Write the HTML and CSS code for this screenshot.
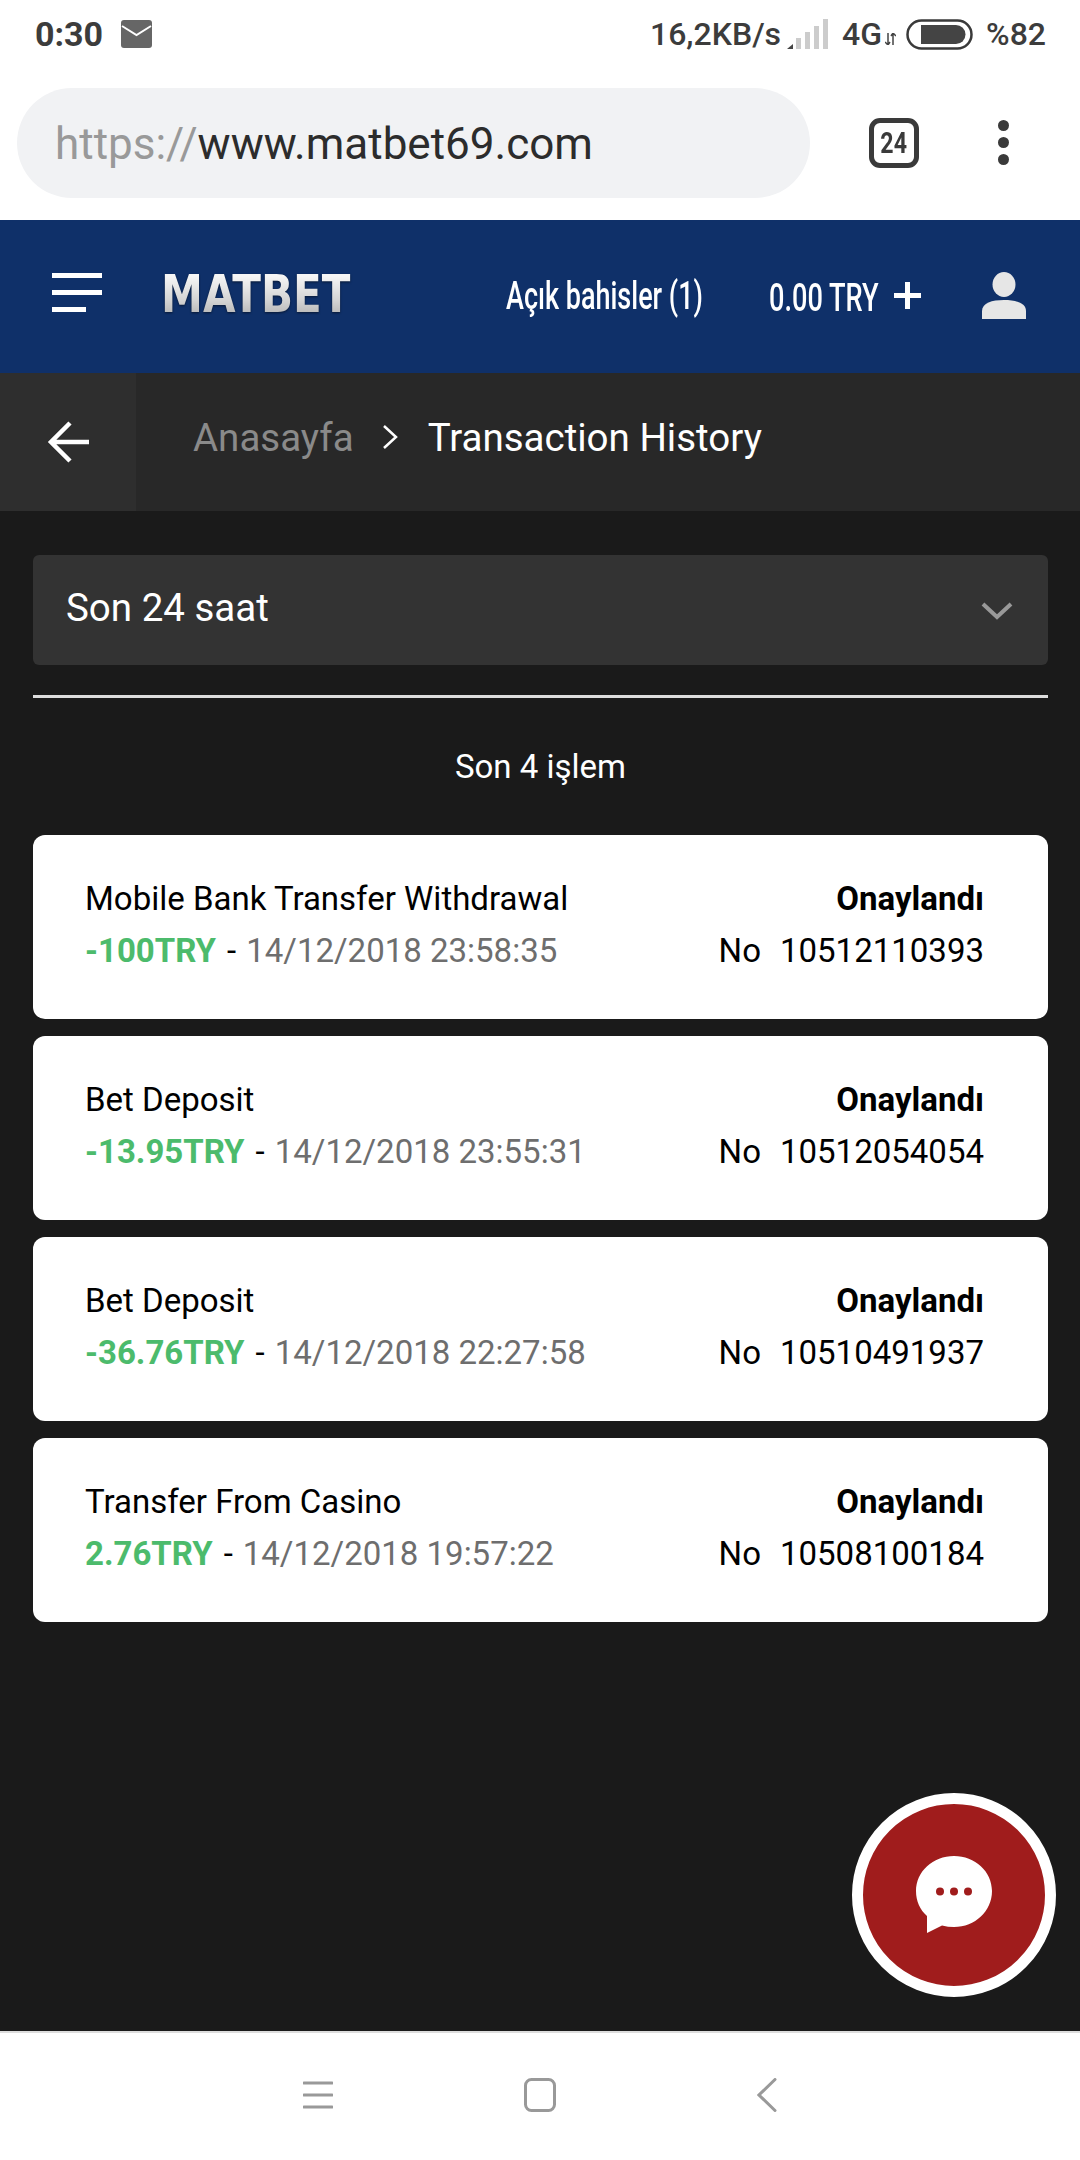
FILE: index.html
```html
<!DOCTYPE html>
<html lang="tr">

<head>
    <meta charset="UTF-8">
    <meta name="viewport" content="width=device-width, initial-scale=1.0">
    <title>Transaction History</title>
    <link rel="stylesheet" href="styles.css">
</head>

<body>
    <div class="statusBar">
        <div class="statusLeft">
            <span class="clock">0:30</span>
            <svg class="mailIcon" width="31" height="28" viewBox="0 0 31 28">
                <rect width="31" height="28" rx="3" fill="#666"/>
                <path d="M1 6 L15.5 15 L30 6" fill="none" stroke="#fff" stroke-width="2"/>
            </svg>
        </div>
        <div class="statusRight">
            <span>16,2KB/s</span>
            <svg class="signalIcon" width="42" height="31" viewBox="0 0 42 31">
                <path d="M1 30 L7 25 V30 Z" fill="#444"/>
                <rect x="10" y="19" width="5" height="11" fill="#ccc"/>
                <rect x="19" y="13" width="5" height="17" fill="#ccc"/>
                <rect x="28" y="7" width="5" height="23" fill="#ccc"/>
                <rect x="37" y="0" width="5" height="30" fill="#ccc"/>
            </svg>
            <span class="netLabel">4G</span>
            <svg class="arrowsIcon" width="11" height="12" viewBox="0 0 11 12">
                <path d="M3 0 V12 M0 9 L3 12 L5 9 M8 12 V0 M6 3 L8 0 L11 3" fill="none" stroke="#444" stroke-width="1.5"/>
            </svg>
            <svg class="batteryIcon" width="67" height="31" viewBox="0 0 67 31">
                <rect x="1.5" y="1.5" width="64" height="28" rx="14" fill="none" stroke="#3a3a3a" stroke-width="2.5"/>
                <path d="M15 6 H50 A9.500 9.500 0 0 1 50 25 H15 Z" fill="#444"/>
            </svg>
            <span>%82</span>
        </div>
    </div>

    <div class="toolbar">
        <div class="urlBar"><span class="urlScheme">https://</span>www.matbet69.com</div>
        <div class="tabCount"><span>24</span></div>
        <div class="moreDots"><i></i><i></i><i></i></div>
    </div>

    <header class="siteHeader">
        <div class="menuBars"><i></i><i></i><i class="short"></i></div>
        <div class="logo"><span>MATBET</span></div>
        <div class="openBets"><span>Açık bahisler (1)</span></div>
        <div class="balance"><span>0.00 TRY</span></div>
        <svg class="plusIcon" width="27" height="27" viewBox="0 0 27 27">
            <path d="M13.500 0 V27 M0 13.500 H27" stroke="#fff" stroke-width="5"/>
        </svg>
        <svg class="userIcon" width="46" height="47" viewBox="0 0 46 47">
            <ellipse cx="23" cy="12.500" rx="11.500" ry="12.500" fill="#e6e6e6"/>
            <path d="M1 47 V39 C1 31 11 28 23 28 C35 28 45 31 45 39 V47 Z" fill="#e6e6e6"/>
        </svg>
    </header>

    <nav class="breadcrumb">
        <div class="backBox">
            <svg width="44" height="44" viewBox="0 0 44 44">
                <path d="M42 22 H4 M23 3 L4 22 L23 41" fill="none" stroke="#fff" stroke-width="4.500"/>
            </svg>
        </div>
        <span class="crumbHome">Anasayfa</span>
        <svg class="crumbSep" width="16" height="26" viewBox="0 0 16 26">
            <path d="M2 2 L14 13 L2 24" fill="none" stroke="#fff" stroke-width="2.500"/>
        </svg>
        <span class="crumbCurrent">Transaction History</span>
    </nav>

    <main class="content">
        <div class="rangeSelect">
            <span>Son 24 saat</span>
            <svg class="rangeArrow" width="34" height="20" viewBox="0 0 34 20">
                <path d="M3 3 L17 16 L31 3" fill="none" stroke="#999" stroke-width="4"/>
            </svg>
        </div>
        <hr class="divider">
        <p class="resultCount">Son 4 işlem</p>

        <div class="txList">
            <div class="txCard">
                <div>
                    <div class="txTitle">Mobile Bank Transfer Withdrawal</div>
                    <div class="txInfo"><b class="txAmount">-100TRY</b><span class="txDash">-</span><span class="txDate">14/12/2018 23:58:35</span></div>
                </div>
                <div class="txRight">
                    <div class="txStatus">Onaylandı</div>
                    <div class="txInfo">No<span class="txNo">10512110393</span></div>
                </div>
            </div>
            <div class="txCard">
                <div>
                    <div class="txTitle">Bet Deposit</div>
                    <div class="txInfo"><b class="txAmount">-13.95TRY</b><span class="txDash">-</span><span class="txDate">14/12/2018 23:55:31</span></div>
                </div>
                <div class="txRight">
                    <div class="txStatus">Onaylandı</div>
                    <div class="txInfo">No<span class="txNo">10512054054</span></div>
                </div>
            </div>
            <div class="txCard">
                <div>
                    <div class="txTitle">Bet Deposit</div>
                    <div class="txInfo"><b class="txAmount">-36.76TRY</b><span class="txDash">-</span><span class="txDate">14/12/2018 22:27:58</span></div>
                </div>
                <div class="txRight">
                    <div class="txStatus">Onaylandı</div>
                    <div class="txInfo">No<span class="txNo">10510491937</span></div>
                </div>
            </div>
            <div class="txCard">
                <div>
                    <div class="txTitle">Transfer From Casino</div>
                    <div class="txInfo"><b class="txAmount">2.76TRY</b><span class="txDash">-</span><span class="txDate">14/12/2018 19:57:22</span></div>
                </div>
                <div class="txRight">
                    <div class="txStatus">Onaylandı</div>
                    <div class="txInfo">No<span class="txNo">10508100184</span></div>
                </div>
            </div>
        </div>

        <div class="chatButton">
            <svg width="78" height="78" viewBox="0 0 78 78">
                <path d="M39 0 C60 0 77 15.500 77 35 C77 55 60 71 39 71 C35 71 31 70.500 27 69.500 L12 77 V60 C5 54 1 45 1 35 C1 15.500 18 0 39 0 Z" fill="#fff"/>
                <circle cx="25" cy="35.500" r="4" fill="#a01c1c"/>
                <circle cx="39" cy="35.500" r="4" fill="#a01c1c"/>
                <circle cx="53" cy="35.500" r="4" fill="#a01c1c"/>
            </svg>
        </div>
    </main>

    <footer class="navBar">
        <svg width="30" height="30" viewBox="0 0 30 30">
            <path d="M1 3 H29 M1 15 H29 M1 27 H29" stroke="#999" stroke-width="3" stroke-linecap="round"/>
        </svg>
        <svg width="32" height="34" viewBox="0 0 32 34">
            <rect x="1.500" y="1.500" width="29" height="31" rx="6" fill="none" stroke="#999" stroke-width="3"/>
        </svg>
        <svg width="20" height="34" viewBox="0 0 20 34">
            <path d="M18 1.500 L2 17 L18 32.500" fill="none" stroke="#999" stroke-width="3" stroke-linecap="round"/>
        </svg>
    </footer>
</body>

</html>
```

FILE: styles.css
```css
* {
    box-sizing: border-box;
}

body {
    margin: 0;
    width: 1080px;
    height: 2160px;
    display: flex;
    flex-direction: column;
    background-color: #1a1a1a;
    font-family: Roboto, "Liberation Sans", sans-serif;
}

.statusBar {
    height: 68px;
    padding: 0 35px;
    display: flex;
    align-items: center;
    justify-content: space-between;
    background-color: #fff;
    color: #3c3c3c;
    font-size: 32px;
    font-weight: 500;
}

.statusLeft,
.statusRight {
    display: flex;
    align-items: center;
}

.clock {
    font-size: 34px;
    font-weight: 700;
}

.mailIcon {
    margin-left: 18px;
}

.statusRight {
    margin-right: -1px;
}

.signalIcon {
    margin-left: 5px;
}

.netLabel {
    margin-left: 14px;
}

.arrowsIcon {
    margin: 10px 0 0 3px;
}

.batteryIcon {
    margin: 0 13px 0 10px;
}

.toolbar {
    height: 152px;
    padding: 20px 0 0 17px;
    display: flex;
    align-items: flex-start;
    background-color: #fff;
}

.urlBar {
    width: 793px;
    height: 110px;
    padding-left: 38px;
    border-radius: 55px;
    background-color: #f1f2f4;
    color: #2c2c2c;
    font-size: 44px;
    line-height: 112px;
}

.urlScheme {
    color: #999;
}

.tabCount {
    width: 50px;
    height: 50px;
    margin: 30px 0 0 59px;
    border: 5px solid #3a3a3a;
    border-radius: 11px;
    color: #3a3a3a;
    font-size: 29px;
    font-weight: 700;
    line-height: 40px;
    text-align: center;
}

.tabCount span {
    display: inline-block;
    transform: scaleX(.8);
}

.moreDots {
    margin: 32px 0 0 79px;
    display: flex;
    flex-direction: column;
    gap: 6px;
}

.moreDots i {
    width: 11px;
    height: 11px;
    border-radius: 50%;
    background-color: #3a3a3a;
}

.siteHeader {
    height: 153px;
    padding: 0 0 8px 52px;
    display: flex;
    align-items: center;
    background-color: #0f3069;
    color: #fff;
}

.menuBars {
    width: 50px;
    display: flex;
    flex-direction: column;
    gap: 12px;
}

.menuBars i {
    height: 5px;
    background-color: #fff;
}

.menuBars i.short {
    width: 34px;
}

/* no condensed family is installed, the header text is squeezed by hand */
.logo,
.openBets,
.balance {
    white-space: nowrap;
}

.logo span,
.openBets span,
.balance span {
    display: inline-block;
    transform-origin: left center;
}

.logo {
    width: 186px;
    margin: 2px 0 0 59px;
    font-family: "DejaVu Sans", sans-serif;
    font-size: 52px;
    font-weight: 700;
    line-height: 60px;
}

.logo span {
    background: linear-gradient(#f6f6f6 20%, #d4d4d4 60%, #bdbdbd 80%);
    -webkit-background-clip: text;
    background-clip: text;
    color: transparent;
    filter: drop-shadow(0 1px 1px rgba(0, 0, 0, .5));
    transform: scaleX(.81);
}

.openBets,
.balance {
    font-size: 38px;
    font-weight: 500;
    line-height: 48px;
}

.openBets {
    width: 196px;
    margin: 6px 0 0 159px;
}

.openBets span {
    transform: scaleX(.71);
}

.balance {
    width: 108px;
    margin: 10px 0 0 67px;
}

.balance span {
    transform: scaleX(.715);
}

.plusIcon {
    margin: 6px 0 0 17px;
}

.userIcon {
    margin: 6px 0 0 60px;
}

.breadcrumb {
    height: 138px;
    padding-bottom: 10px;
    display: flex;
    align-items: center;
    background-color: #282828;
    font-size: 38.5px;
}

.backBox {
    width: 136px;
    height: 138px;
    margin-bottom: -10px;
    padding-left: 47px;
    display: flex;
    align-items: center;
    background-color: #2e2e2e;
}

.crumbHome {
    margin-left: 57px;
    color: #8a8a8a;
}

.crumbSep {
    margin: 0 30px 0 28px;
}

.crumbCurrent {
    color: #fff;
}

.content {
    position: relative;
    flex: 1;
    padding: 44px 32px 0 33px;
}

.rangeSelect {
    height: 110px;
    padding: 0 34px 0 33px;
    display: flex;
    align-items: center;
    justify-content: space-between;
    border-radius: 6px;
    background-color: #333;
    color: #fff;
    font-size: 38.5px;
}

.rangeSelect span {
    margin-bottom: 5px;
}

.rangeArrow {
    margin-top: 2px;
}

.divider {
    height: 3px;
    margin: 30px 0 0;
    border: 0;
    background-color: #ddd;
}

.resultCount {
    margin: 50px 0 49px;
    color: #fff;
    font-size: 33px;
    line-height: 38px;
    text-align: center;
}

.txList {
    display: flex;
    flex-direction: column;
    gap: 17px;
}

.txCard {
    height: 184px;
    padding: 0 64px 4px 52px;
    display: flex;
    align-items: center;
    justify-content: space-between;
    border-radius: 12px;
    background-color: #fff;
    color: #000;
    font-size: 33px;
    line-height: 52px;
}

.txAmount {
    color: #4cbb6c;
}

.txDash {
    margin: 0 10px 0 11px;
}

.txDate {
    color: #6e6e6e;
}

.txRight {
    text-align: right;
}

.txStatus {
    font-weight: 700;
}

.txNo {
    margin-left: 19px;
}

.chatButton {
    position: absolute;
    top: 1282px;
    left: 852px;
    width: 204px;
    height: 204px;
    display: flex;
    align-items: center;
    justify-content: center;
    border: 11px solid #fff;
    border-radius: 50%;
    background-color: #a01c1c;
}

.navBar {
    height: 129px;
    padding: 0 0 4px 303px;
    display: flex;
    align-items: center;
    border-top: 2px solid #ddd;
    background-color: #fff;
}

.navBar svg:nth-child(2) {
    margin: 0 201px 0 191px;
}
```
